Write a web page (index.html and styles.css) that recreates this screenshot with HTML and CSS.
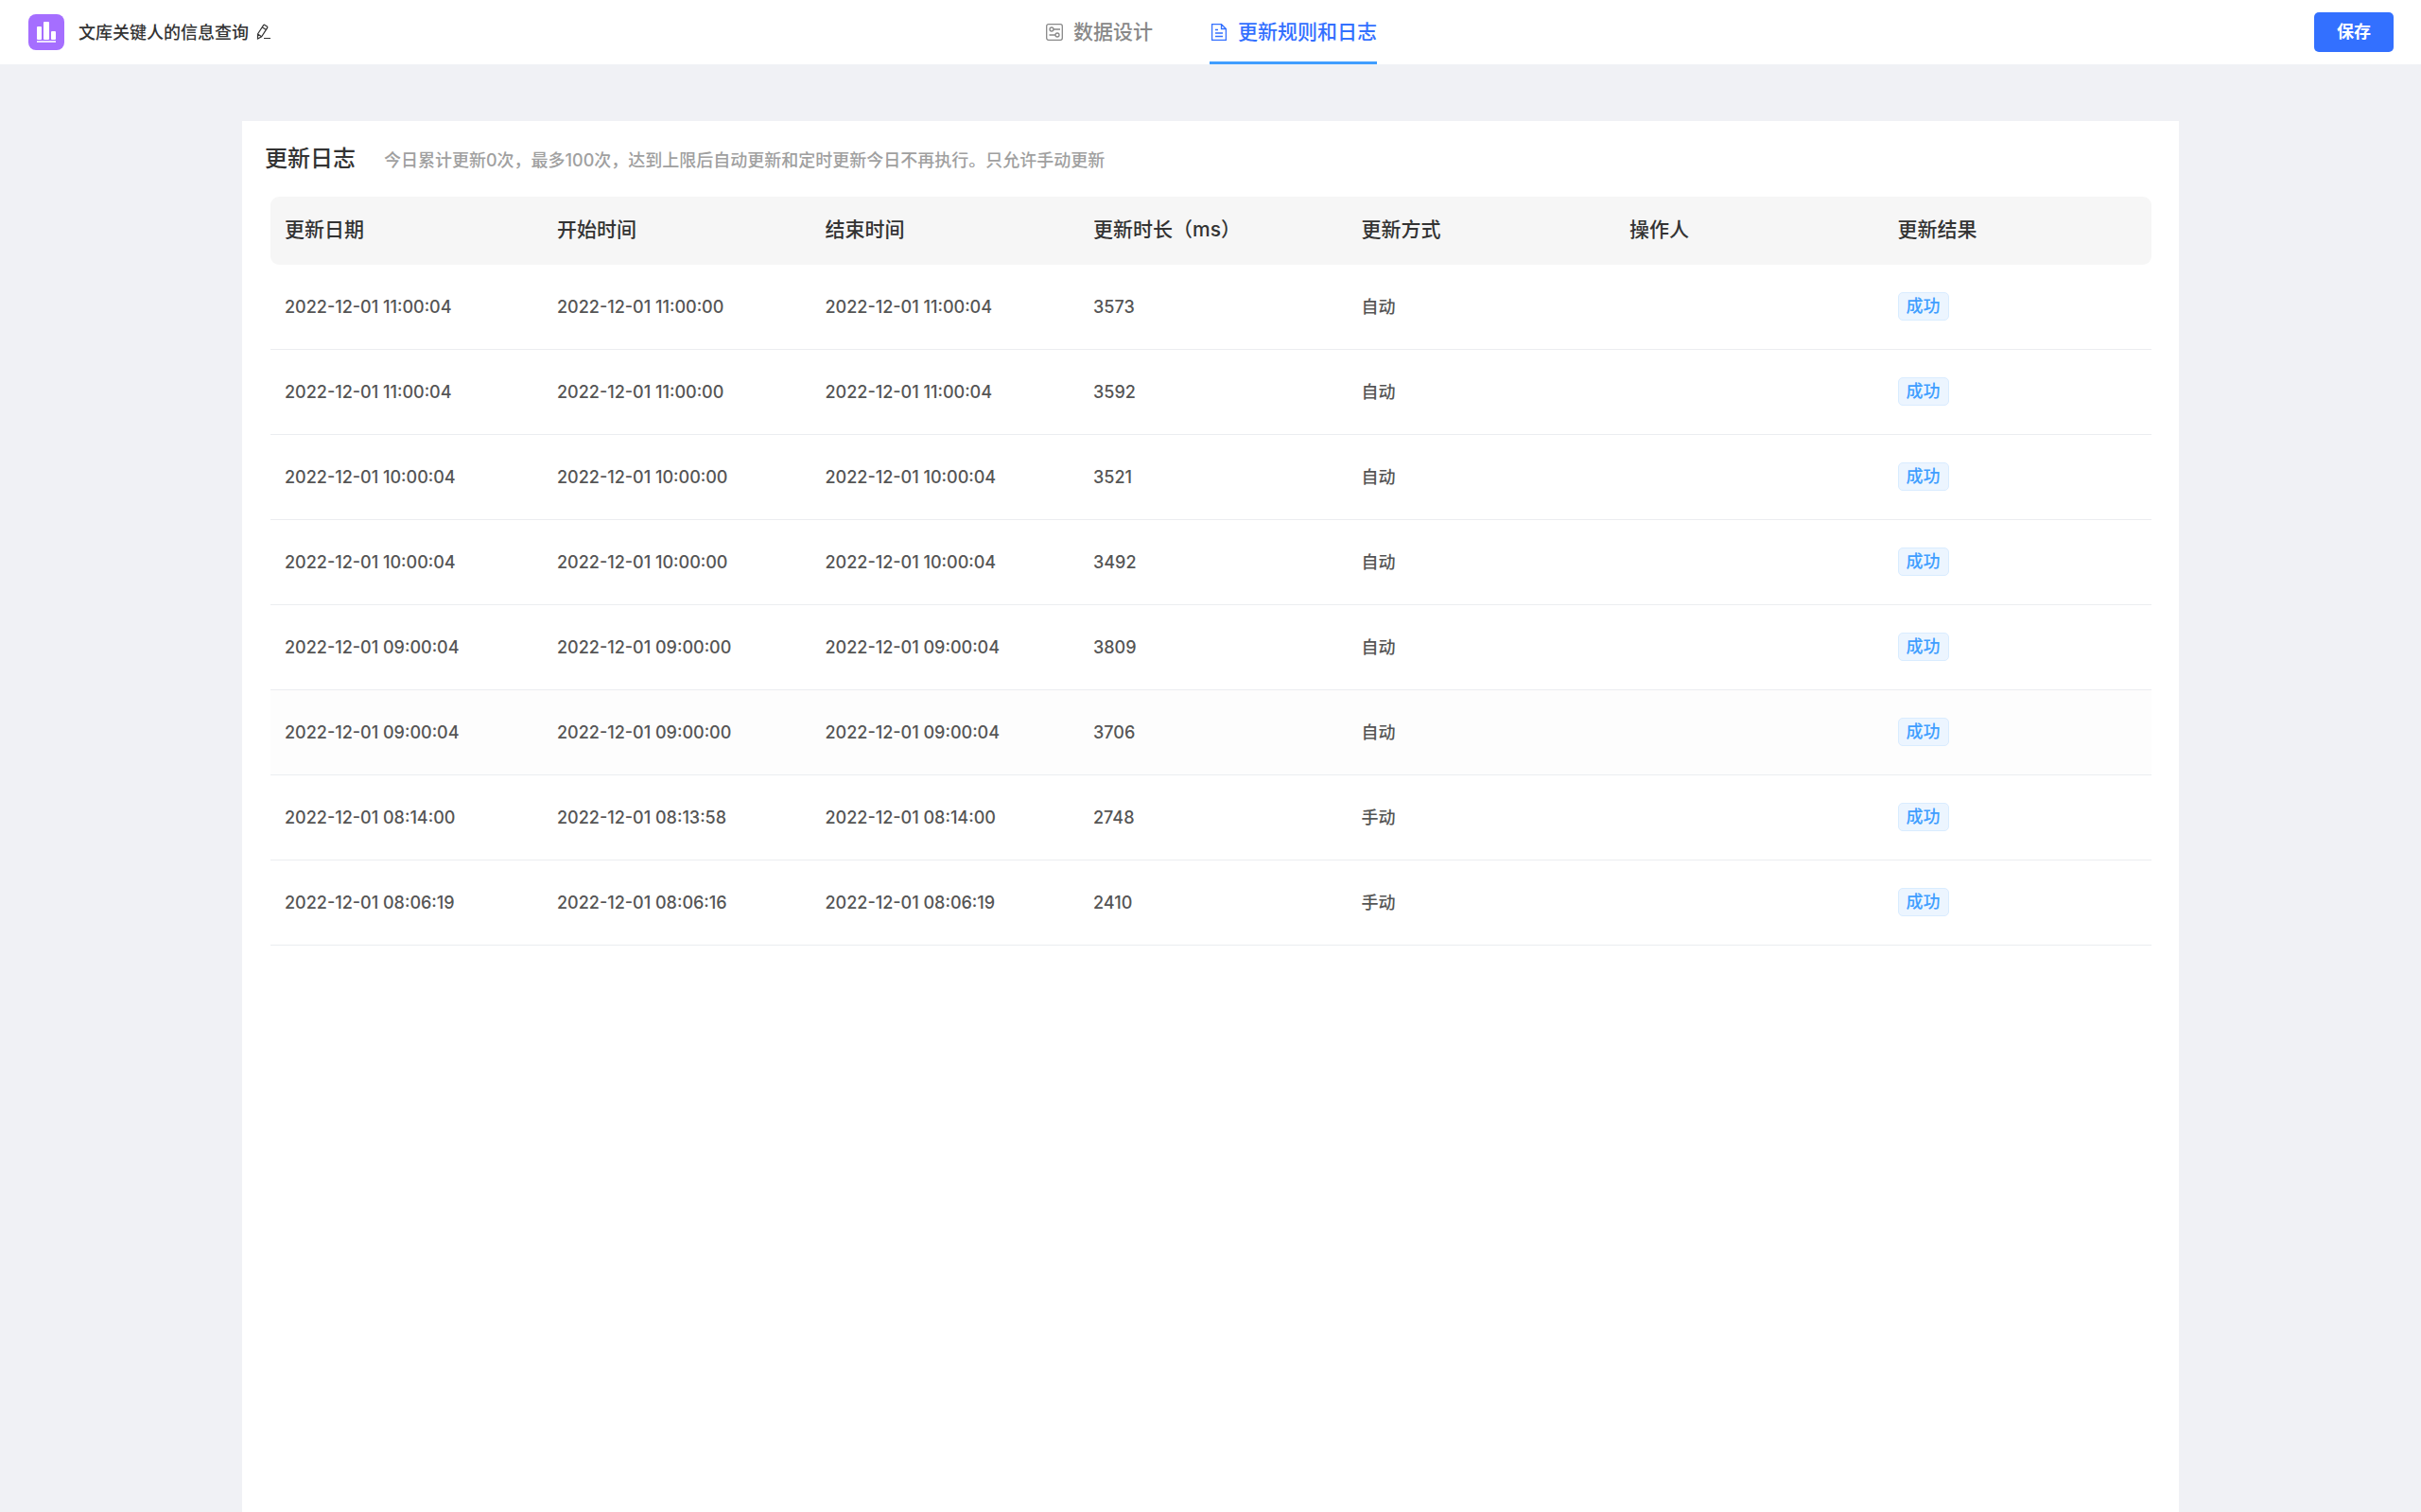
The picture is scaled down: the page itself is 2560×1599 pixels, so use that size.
FILE: index.html
```html
<!DOCTYPE html>
<html lang="zh-CN">
<head>
<meta charset="utf-8">
<title>文库关键人的信息查询</title>
<link rel="stylesheet" href="styles.css">
</head>
<body>
<header class="topbar">
  <div class="topbar-left">
    <svg class="logo" viewBox="0 0 38 38" aria-hidden="true">
      <rect width="38" height="38" rx="8" fill="#a56eff"/>
      <g fill="#fff">
        <rect x="9" y="13" width="5" height="14" rx="1"/>
        <rect x="16" y="8" width="6" height="19" rx="1"/>
        <rect x="24" y="18" width="5" height="9" rx="1"/>
        <rect x="9" y="28" width="20" height="2" opacity=".8"/>
      </g>
    </svg>
    <h1 class="app-title">文库关键人的信息查询</h1>
    <button class="edit" type="button" aria-label="编辑">
      <svg viewBox="0 0 16 18" fill="none" stroke="#333" stroke-width="1.2">
        <path d="M1.5 11 7.6 1.6Q8.2.9 9 1.4L11.4 3Q12.2 3.6 11.7 4.4L5.6 13.8 1.5 16ZM6.3 3.7 10.3 6.4M1.5 11 5.6 13.8M8 15.5H15"/>
      </svg>
    </button>
  </div>
  <nav class="tabs">
    <a class="tab" href="#design">
      <svg class="tab-icon" viewBox="0 0 18 18" fill="none" stroke="currentColor" stroke-width="1.3">
        <rect x=".7" y=".7" width="16.6" height="16.6" rx="2"/>
        <circle cx="6" cy="6" r="2"/><circle cx="12" cy="12" r="2"/>
        <path d="M8 6H15M3.5 12H10"/>
      </svg>
      <span>数据设计</span>
    </a>
    <a class="tab active" href="#log" aria-current="page">
      <svg class="tab-icon" viewBox="0 0 18 18" fill="none" stroke="currentColor" stroke-width="1.3">
        <path d="M1.6.6H11.5L16.4 5.5V17.4H1.6ZM11.5.6V5.5H16.4M5 6.5H8M5 10H13M5 13.5H13"/>
      </svg>
      <span>更新规则和日志</span>
    </a>
  </nav>
  <div class="topbar-right"><button class="save" type="button">保存</button></div>
</header>
<main class="card">
  <div class="card-head">
    <h2 class="card-title">更新日志</h2>
    <p class="card-note">今日累计更新0次，最多100次，达到上限后自动更新和定时更新今日不再执行。只允许手动更新</p>
  </div>
  <table class="log">
    <thead>
      <tr><th class="col-date">更新日期</th><th>开始时间</th><th>结束时间</th><th>更新时长（ms）</th><th>更新方式</th><th>操作人</th><th>更新结果</th></tr>
    </thead>
    <tbody>
      <tr><td>2022-12-01 11:00:04</td><td>2022-12-01 11:00:00</td><td>2022-12-01 11:00:04</td><td>3573</td><td>自动</td><td></td><td><span class="tag">成功</span></td></tr>
      <tr><td>2022-12-01 11:00:04</td><td>2022-12-01 11:00:00</td><td>2022-12-01 11:00:04</td><td>3592</td><td>自动</td><td></td><td><span class="tag">成功</span></td></tr>
      <tr><td>2022-12-01 10:00:04</td><td>2022-12-01 10:00:00</td><td>2022-12-01 10:00:04</td><td>3521</td><td>自动</td><td></td><td><span class="tag">成功</span></td></tr>
      <tr><td>2022-12-01 10:00:04</td><td>2022-12-01 10:00:00</td><td>2022-12-01 10:00:04</td><td>3492</td><td>自动</td><td></td><td><span class="tag">成功</span></td></tr>
      <tr><td>2022-12-01 09:00:04</td><td>2022-12-01 09:00:00</td><td>2022-12-01 09:00:04</td><td>3809</td><td>自动</td><td></td><td><span class="tag">成功</span></td></tr>
      <tr class="hovered"><td>2022-12-01 09:00:04</td><td>2022-12-01 09:00:00</td><td>2022-12-01 09:00:04</td><td>3706</td><td>自动</td><td></td><td><span class="tag">成功</span></td></tr>
      <tr><td>2022-12-01 08:14:00</td><td>2022-12-01 08:13:58</td><td>2022-12-01 08:14:00</td><td>2748</td><td>手动</td><td></td><td><span class="tag">成功</span></td></tr>
      <tr><td>2022-12-01 08:06:19</td><td>2022-12-01 08:06:16</td><td>2022-12-01 08:06:19</td><td>2410</td><td>手动</td><td></td><td><span class="tag">成功</span></td></tr>
    </tbody>
  </table>
</main>
</body>
</html>
```
FILE: styles.css
```css
* { box-sizing: border-box; }

body {
  display: flex;
  flex-direction: column;
  min-height: 100vh;
  margin: 0;
  background: #f0f1f5;
  color: #333;
  font: 500 18px/24px Inter, "Noto Sans CJK SC", sans-serif;
}

h1, h2, p { margin: 0; }

.topbar {
  display: grid;
  grid-template-columns: 1fr auto 1fr;
  align-items: center;
  height: 68px;
  padding: 0 29px 0 30px;
  background: #fff;
}

.topbar-left { display: flex; align-items: center; }
.topbar-right { display: flex; justify-content: flex-end; }

.logo { width: 38px; height: 38px; margin-right: 15px; }
.app-title { padding-top: 2px; font-size: 18px; font-weight: 500; }

.edit {
  display: flex;
  margin-left: 8px;
  padding: 0;
  border: 0;
  background: none;
  cursor: pointer;
}
.edit svg { width: 16px; height: 18px; }

.tabs { display: flex; gap: 60px; height: 68px; }
.tab {
  display: flex;
  align-items: center;
  gap: 11px;
  padding: 3px 0 0 1px;
  border-bottom: 3px solid transparent;
  color: #888;
  font-size: 21px;
  text-decoration: none;
}
.tab-icon { width: 18px; height: 18px; }
.tab.active { border-color: #409eff; color: #3370ff; }

.save {
  width: 84px;
  height: 42px;
  padding: 0;
  border: 0;
  border-radius: 5px;
  background: #3370ff;
  color: #fff;
  font: inherit;
  font-weight: 700;
  cursor: pointer;
}

.card {
  flex: 1;
  width: 80%;
  margin: 60px auto 0;
  padding: 24px 29px 0 30px;
  background: #fff;
}

.card-head {
  display: flex;
  align-items: center;
  gap: 30px;
  height: 32px;
  margin: 0 0 24px -6px;
}
.card-title { font-size: 24px; font-weight: 500; line-height: 32px; }
.card-note { padding-top: 4px; color: #a0a0a0; }

.log {
  width: 100%;
  table-layout: fixed;
  border-collapse: separate;
  border-spacing: 0;
}
.log th, .log td { padding: 0 15px; text-align: left; }
.log th {
  height: 72px;
  padding-bottom: 2px;
  background: #f6f6f6;
  font-size: 21px;
  font-weight: 500;
}
.log .col-date { width: 288px; }
.log th:first-child { border-radius: 9px 0 0 9px; }
.log th:last-child { border-radius: 0 9px 9px 0; }
.log td {
  height: 90px;
  border-bottom: 1px solid #ebedf0;
  color: #555;
}
.log td:last-child { padding-bottom: 2px; }
.hovered td { background: #fdfdfd; }

.tag {
  display: inline-block;
  padding: 2px 8px;
  border: 1px solid #d9ecff;
  border-radius: 5px;
  background: #ecf5ff;
  color: #409eff;
}
```
